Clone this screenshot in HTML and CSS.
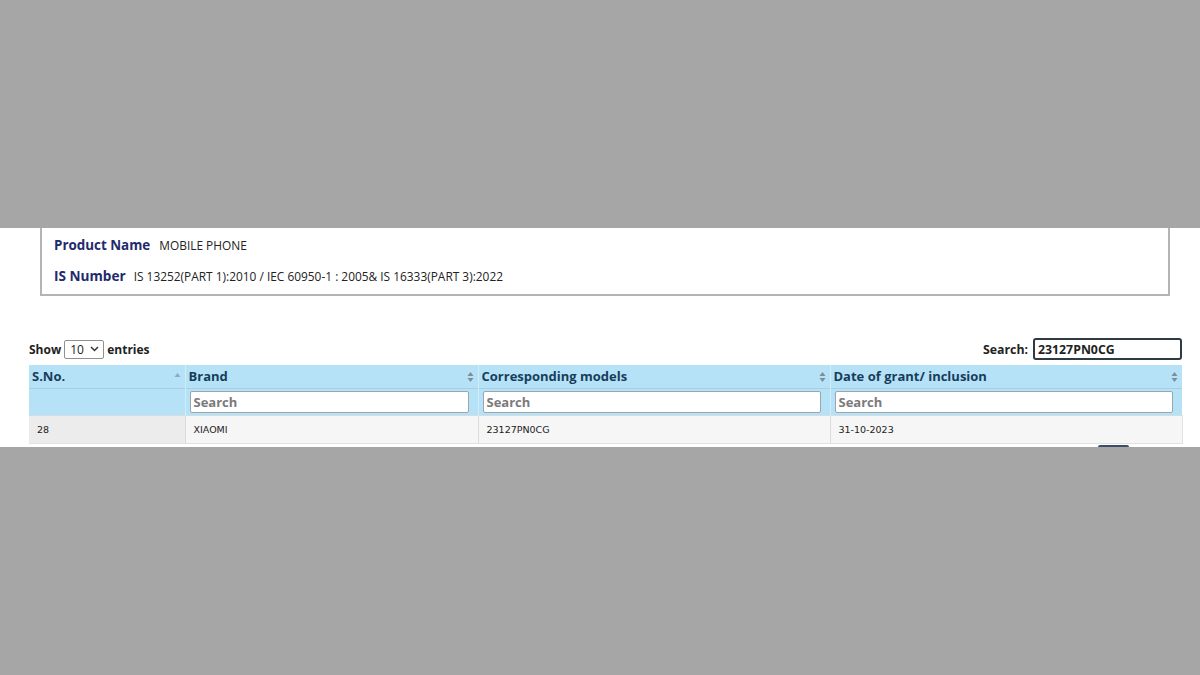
FILE: index.html
```html
<!doctype html>
<html>
<head>
<meta charset="utf-8">
<title>Product details</title>
	<link rel="stylesheet" href="styles.css">
</head>

<body>
	<div class="shade top"></div>

	<div class="sheet">
		<div class="info">
			<p class="line"><span class="label">Product Name</span><span class="value">MOBILE PHONE</span></p>
			<p class="line"><span class="label big">IS Number</span><span class="value">IS 13252(PART 1):2010 / IEC 60950-1 : 2005&amp; IS 16333(PART 3):2022</span></p>
		</div>

		<div class="tools">
			<div class="length">
				<span>Show</span>
				<span class="select">10 <svg width="9" height="6" viewBox="0 0 9 6"><path d="M1 1l3.5 3.5L8 1" fill="none" stroke="#333" stroke-width="1.5"/></svg></span>
				<span>entries</span>
			</div>
			<div class="filter">
				<span>Search:</span>
				<span class="query">23127PN0CG</span>
			</div>
		</div>

		<table class="grid">
			<thead>
				<tr class="heads">
					<th class="c1">S.No.<svg class="sort" width="7" height="12" viewBox="0 0 7 12"><path d="M3.5 2L6.5 6H0.5z" fill="#8aaccc"/></svg></th>
					<th class="c2">Brand<svg class="sort" width="7" height="12" viewBox="0 0 7 12"><path d="M3.5 1L6.5 5H0.5z M3.5 11L6.5 7H0.5z" fill="#7d8c99"/></svg></th>
					<th class="c3">Corresponding models<svg class="sort" width="7" height="12" viewBox="0 0 7 12"><path d="M3.5 1L6.5 5H0.5z M3.5 11L6.5 7H0.5z" fill="#7d8c99"/></svg></th>
					<th class="c4">Date of grant/ inclusion<svg class="sort" width="7" height="12" viewBox="0 0 7 12"><path d="M3.5 1L6.5 5H0.5z M3.5 11L6.5 7H0.5z" fill="#7d8c99"/></svg></th>
				</tr>
				<tr class="finds">
					<th></th>
					<th><span class="box">Search</span></th>
					<th><span class="box">Search</span></th>
					<th><span class="box">Search</span></th>
				</tr>
			</thead>
			<tbody>
				<tr class="row">
					<td class="sorted">28</td>
					<td>XIAOMI</td>
					<td>23127PN0CG</td>
					<td>31-10-2023</td>
				</tr>
			</tbody>
		</table>

		<div class="pager"><span class="btn"></span></div>
	</div>

	<div class="shade"></div>
</body>
</html>
```

FILE: styles.css
```css
*{padding: 0;margin: 0;box-sizing: border-box;}
body{
	background-color: #a6a6a6;
	font-family: "Open Sans", "Noto Sans", sans-serif;
	color: #222;}

.shade{height: 228px;background-color: #a6a6a6;}

.sheet{
	height: 219px;
	background-color: #fff;
	padding: 0 18px 0 29px;
	overflow: hidden;}

/* product box, top edge is cut off by the crop */
.info{
	margin: 0 12px 0 11px;
	height: 68px;
	border: 2px solid #b4b4b4;
	border-top: none;
	padding: 8px 0 0 12px;}
.info .line{
	display: flex;
	align-items: baseline;
	height: 30px;}
.label{
	font-size: 13.4px;
	font-weight: 700;
	color: #232a6c;
	margin-right: 9px;}
.label.big{font-size: 13.6px;margin-right: 8px;}
.value{font-size: 11.9px;color: #222;}

.tools{
	display: flex;
	justify-content: space-between;
	align-items: center;
	margin-top: 42px;
	height: 22px;}
.length, .filter{
	display: flex;
	align-items: center;
	gap: 3px;
	font-size: 12px;
	font-weight: 700;
	color: #222;}
.select{
	display: inline-flex;
	align-items: center;
	justify-content: space-between;
	width: 40px;
	height: 19px;
	padding: 0 4px 0 5px;
	border: 1px solid #8f8f8f;
	border-radius: 2px;
	font-weight: 400;
	font-size: 12px;}
.filter{gap: 5px;font-size: 12.3px;}
.query{
	display: inline-flex;
	align-items: center;
	width: 149px;
	height: 22px;
	padding-left: 3px;
	border: 2px solid #2e3a44;
	border-radius: 3px;
	font-size: 12.3px;}

.grid{
	width: 1153px;
	margin-top: 5px;
	border-collapse: collapse;
	table-layout: fixed;}
.grid .c1{width: 156px;}
.grid .c2{width: 293px;}
.grid .c3{width: 352px;}
.grid .c4{width: 352px;}

.heads th{
	position: relative;
	height: 23px;
	padding: 0 3px;
	background-color: #b6e2f7;
	text-align: left;
	font-size: 13px;
	font-weight: 700;
	color: #173d5c;
	border-left: 1px solid #d2ecf8;}
.heads th:first-child{border-left: none;}
.sort{
	position: absolute;
	right: 4px;
	top: 6px;}

.finds th{
	height: 26px;
	padding: 2px 9px 2px 4px;
	background-color: #b6e2f7;
	border-top: 1px solid #a6cfe2;
	border-left: 1px solid #d2ecf8;}
.finds th:first-child{border-left: none;}
.box{
	display: flex;
	align-items: center;
	height: 22px;
	padding-left: 3px;
	background-color: #fff;
	border: 1px solid #9aa6ad;
	border-radius: 2px;
	font-size: 13px;
	font-weight: 700;
	color: #7a7a7a;}

.row td{
	height: 28px;
	padding: 0 8px;
	background-color: #f6f6f6;
	font-family: "DejaVu Sans", Verdana, sans-serif;
	font-size: 9.5px;
	color: #222;
	border-top: 1px solid #d4dde2;
	border-left: 1px solid #dcdcdc;
	border-bottom: 1px solid #e2e2e2;}
.row td:last-child{border-right: 1px solid #e2e2e2;}
.row td.sorted{background-color: #ececec;border-left: none;}

.pager{
	display: flex;
	justify-content: flex-end;
	padding-right: 53px;
	margin-top: 1px;}
.pager .btn{
	width: 31px;
	height: 14px;
	background-color: #3a4e66;
	border-radius: 2px;}
```
